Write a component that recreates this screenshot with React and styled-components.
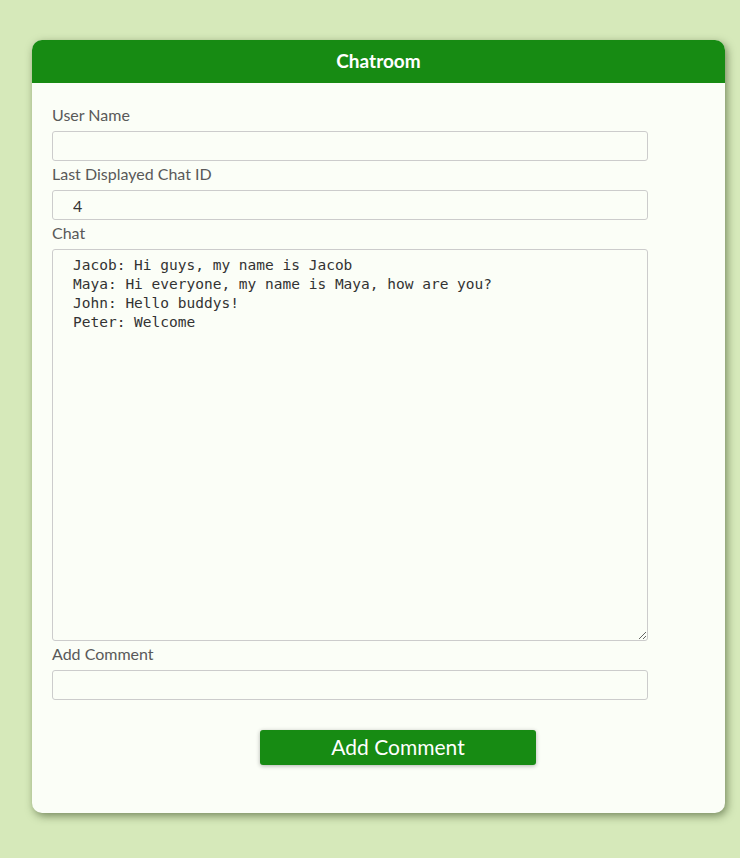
import styled, { createGlobalStyle } from 'styled-components';

const GlobalStyle = createGlobalStyle`
  * {
    box-sizing: border-box;
  }
  body {
    margin: 0;
    background-color: #d6e9ba;
    font-family: 'Lato', 'Liberation Sans', sans-serif;
  }
`;

const messages = [
  'Jacob: Hi guys, my name is Jacob',
  'Maya: Hi everyone, my name is Maya, how are you?',
  'John: Hello buddys!',
  'Peter: Welcome',
];

export default function App() {
  return (
    <>
      <GlobalStyle />
      <Page>
        <Card>
          <Header>Chatroom</Header>
          <Form onSubmit={(e) => e.preventDefault()}>
            <Label htmlFor="username">User Name</Label>
            <Input id="username" />
            <Label htmlFor="lastid">Last Displayed Chat ID</Label>
            <Input id="lastid" defaultValue="4" />
            <Label htmlFor="chat">Chat</Label>
            <ChatArea id="chat" defaultValue={messages.join('\n')} readOnly />
            <Label htmlFor="comment">Add Comment</Label>
            <Input id="comment" />
            <ButtonRow>
              <Button type="submit">Add Comment</Button>
            </ButtonRow>
          </Form>
        </Card>
      </Page>
    </>
  );
}

const Page = styled.div`
  padding: 40px 15px 45px 32px;
`;

const Card = styled.div`
  background-color: #fbfef7;
  border-radius: 10px;
  overflow: hidden;
  box-shadow: 2px 3px 8px rgba(40, 60, 20, 0.55);
`;

const Header = styled.h1`
  margin: 0;
  height: 43px;
  padding-bottom: 3px;
  background-color: #178b13;
  color: #ffffff;
  font-size: 19px;
  font-weight: 700;
  display: flex;
  align-items: center;
  justify-content: center;
`;

const Form = styled.form`
  display: flex;
  flex-direction: column;
  padding: 19px 20px 48px 20px;
`;

const Label = styled.label`
  display: block;
  font-size: 16px;
  line-height: 19px;
  color: #595959;
  margin: 3px 0 7px;
`;

const Input = styled.input`
  width: 596px;
  height: 30px;
  border: 1px solid #cccccc;
  border-radius: 3px;
  background-color: #fbfef7;
  padding: 0 20px;
  font-family: 'Lato', sans-serif;
  font-size: 16px;
  color: #333333;
  outline: none;
`;

const ChatArea = styled.textarea`
  width: 596px;
  height: 392px;
  border: 1px solid #cccccc;
  border-radius: 3px;
  background-color: #fbfef7;
  padding: 6px 20px;
  font-family: 'DejaVu Sans Mono', 'Liberation Mono', monospace;
  font-size: 14.5px;
  line-height: 19px;
  color: #333333;
  outline: none;
`;

const ButtonRow = styled.div`
  display: flex;
  padding-left: 208px;
  margin-top: 30px;
`;

const Button = styled.button`
  width: 276px;
  height: 35px;
  padding: 0 0 2px;
  background-color: #178b13;
  border: none;
  border-radius: 3px;
  box-shadow: 0 1px 4px rgba(0, 0, 0, 0.3);
  color: #ffffff;
  font-family: 'Lato', sans-serif;
  font-size: 21px;

  &:hover {
    cursor: pointer;
  }
`;
